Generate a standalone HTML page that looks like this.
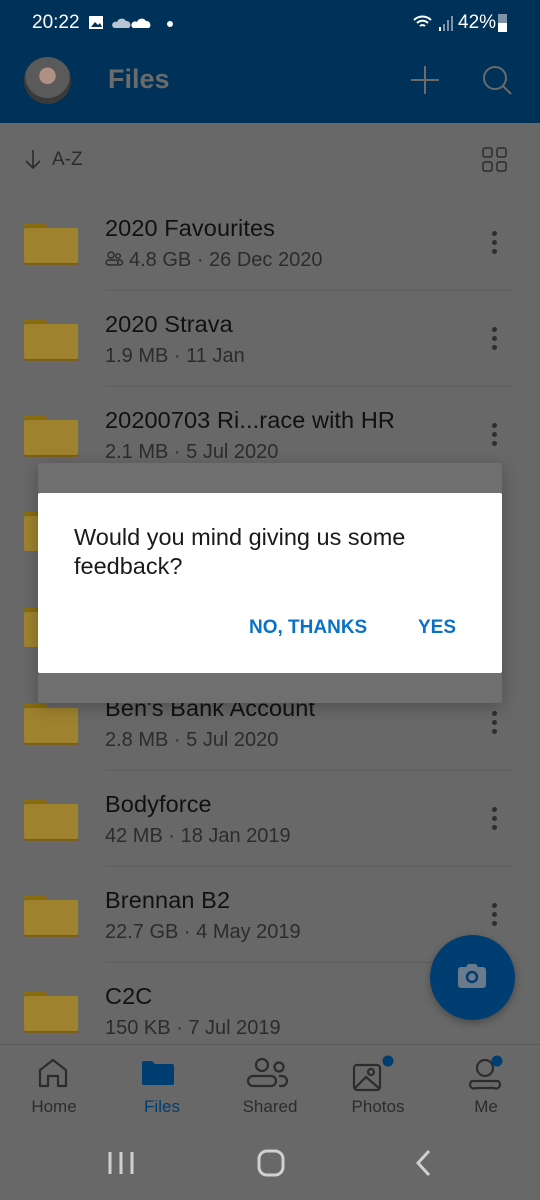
<!DOCTYPE html>
<html><head><meta charset="utf-8"><style>
*{margin:0;padding:0;box-sizing:border-box}
body{width:540px;height:1200px;overflow:hidden;background:#686868;font-family:"Liberation Sans",Roboto,sans-serif;position:relative}
.abs{position:absolute}
.hdr{left:0;top:0;width:540px;height:123px;background:#003259}
.row{position:absolute;left:0;width:540px;height:96px}
.fold{position:absolute;left:24px;top:-6px;width:54px;height:42px}
.t{position:absolute;left:105px;top:-14px;font-size:23.5px;color:#111;letter-spacing:0.1px}
.s{position:absolute;left:105px;top:20px;font-size:20px;color:#2c2c2c}
.dots{position:absolute;left:492px;top:2px;width:5px}
.dots i{display:block;width:5px;height:5px;border-radius:50%;background:#2e2e2e;margin-bottom:4px}
.sep{position:absolute;left:105px;right:25px;height:1px;background:#5e5e5e}
.nav{font-size:17px;color:#2c2c2c;text-align:center;width:100px;position:absolute;top:1097px}
</style></head><body>
<div class="abs hdr"></div>
<div class="abs" style="left:32px;top:12px;font-size:19px;color:#fff">20:22</div>
<svg class="abs" style="left:88px;top:14px" width="90" height="20">
<rect x="1" y="2" width="14" height="13" fill="#fff"/><path d="M3 13l4-5 3 3 2-2 2 4z" fill="#003259"/>
<path d="M26 14h15a4 4 0 0 0-3-7 5 5 0 0 0-9 1 3 3 0 0 0-3 6z" fill="#b8c6d4"/>
<path d="M45 14h16a4 4 0 0 0-3-7 5 5 0 0 0-9 1 3 3 0 0 0-4 6z" fill="#fff"/>
<circle cx="82" cy="10" r="3" fill="#fff"/></svg>
<svg class="abs" style="left:412px;top:13px" width="44" height="20">
<path d="M2 7a12 12 0 0 1 17 0M5 10a8 8 0 0 1 11 0M8 13a4 4 0 0 1 5 0" stroke="#fff" stroke-width="2" fill="none"/>
<rect x="27" y="14" width="2" height="4" fill="#fff"/>
<rect x="31" y="11" width="2" height="7" fill="#7f93a8"/><rect x="35" y="7" width="2" height="11" fill="#7f93a8"/><rect x="39" y="3" width="2" height="15" fill="#7f93a8"/></svg>
<div class="abs" style="left:458px;top:12px;font-size:19px;color:#fff">42%</div>
<div class="abs" style="left:498px;top:14px;width:9px;height:18px;background:#7f93a8"><div style="position:absolute;bottom:0;width:9px;height:9px;background:#fff"></div></div>
<div class="abs" style="left:24px;top:57px;width:47px;height:47px;border-radius:50%;background:radial-gradient(circle at 50% 40%,#b09080 0 22%,#5a5a5a 23% 60%,#3a3a3a 61%)"></div>
<div class="abs" style="left:108px;top:64px;font-size:27px;font-weight:bold;color:#6b6b6b">Files</div>
<svg class="abs" style="left:406px;top:62px" width="110" height="36">
<path d="M19 4v28M5 18h28" stroke="#6b6b6b" stroke-width="2"/>
<circle cx="89" cy="16" r="11" stroke="#6b6b6b" stroke-width="2" fill="none"/><path d="M97 24l8 8" stroke="#6b6b6b" stroke-width="2"/></svg>
<svg class="abs" style="left:24px;top:148px" width="20" height="24"><path d="M9 2v18M2 13l7 7 7-7" stroke="#2c2c2c" stroke-width="1.6" fill="none"/></svg>
<div class="abs" style="left:52px;top:149px;font-size:19px;color:#2c2c2c">A-Z</div>
<svg class="abs" style="left:482px;top:147px" width="26" height="26" fill="none" stroke="#2c2c2c" stroke-width="1.5"><rect x="1" y="1" width="9" height="9" rx="2"/><rect x="15" y="1" width="9" height="9" rx="2"/><rect x="1" y="15" width="9" height="9" rx="2"/><rect x="15" y="15" width="9" height="9" rx="2"/></svg>

<div class="row" style="top:229px"><svg class="fold" viewBox="0 0 54 42"><path d="M0 2a2 2 0 0 1 2-2h18l4 4H0z" fill="#8a6c10"/><rect x="0" y="5" width="54" height="37" rx="2" fill="#7a5e1e"/><rect x="0" y="5" width="54" height="35" rx="2" fill="#9e822d"/></svg><div class="t">2020 Favourites</div><div class="s"><svg width="20" height="16" style="vertical-align:-1px;margin-right:4px" fill="none" stroke="#2c2c2c" stroke-width="1.4"><circle cx="6" cy="4" r="3"/><circle cx="13" cy="5" r="2.3"/><rect x="1" y="9" width="12" height="5" rx="2.5"/><path d="M13 9h2a2.5 2.5 0 0 1 0 5h-2"/></svg>4.8 GB · 26 Dec 2020</div><div class="dots"><i></i><i></i><i></i></div><div class="sep" style="top:61px"></div></div>
<div class="row" style="top:325px"><svg class="fold" viewBox="0 0 54 42"><path d="M0 2a2 2 0 0 1 2-2h18l4 4H0z" fill="#8a6c10"/><rect x="0" y="5" width="54" height="37" rx="2" fill="#7a5e1e"/><rect x="0" y="5" width="54" height="35" rx="2" fill="#9e822d"/></svg><div class="t">2020 Strava</div><div class="s">1.9 MB · 11 Jan</div><div class="dots"><i></i><i></i><i></i></div><div class="sep" style="top:61px"></div></div>
<div class="row" style="top:421px"><svg class="fold" viewBox="0 0 54 42"><path d="M0 2a2 2 0 0 1 2-2h18l4 4H0z" fill="#8a6c10"/><rect x="0" y="5" width="54" height="37" rx="2" fill="#7a5e1e"/><rect x="0" y="5" width="54" height="35" rx="2" fill="#9e822d"/></svg><div class="t">20200703 Ri...race with HR</div><div class="s">2.1 MB · 5 Jul 2020</div><div class="dots"><i></i><i></i><i></i></div></div>
<div class="row" style="top:517px"><svg class="fold" viewBox="0 0 54 42"><path d="M0 2a2 2 0 0 1 2-2h18l4 4H0z" fill="#8a6c10"/><rect x="0" y="5" width="54" height="35" rx="2" fill="#9e822d"/></svg></div>
<div class="row" style="top:613px"><svg class="fold" viewBox="0 0 54 42"><path d="M0 2a2 2 0 0 1 2-2h18l4 4H0z" fill="#8a6c10"/><rect x="0" y="5" width="54" height="35" rx="2" fill="#9e822d"/></svg></div>
<div class="row" style="top:709px"><svg class="fold" viewBox="0 0 54 42"><path d="M0 2a2 2 0 0 1 2-2h18l4 4H0z" fill="#8a6c10"/><rect x="0" y="5" width="54" height="37" rx="2" fill="#7a5e1e"/><rect x="0" y="5" width="54" height="35" rx="2" fill="#9e822d"/></svg><div class="t">Ben's Bank Account</div><div class="s">2.8 MB · 5 Jul 2020</div><div class="dots"><i></i><i></i><i></i></div><div class="sep" style="top:61px"></div></div>
<div class="row" style="top:805px"><svg class="fold" viewBox="0 0 54 42"><path d="M0 2a2 2 0 0 1 2-2h18l4 4H0z" fill="#8a6c10"/><rect x="0" y="5" width="54" height="37" rx="2" fill="#7a5e1e"/><rect x="0" y="5" width="54" height="35" rx="2" fill="#9e822d"/></svg><div class="t">Bodyforce</div><div class="s">42 MB · 18 Jan 2019</div><div class="dots"><i></i><i></i><i></i></div><div class="sep" style="top:61px"></div></div>
<div class="row" style="top:901px"><svg class="fold" viewBox="0 0 54 42"><path d="M0 2a2 2 0 0 1 2-2h18l4 4H0z" fill="#8a6c10"/><rect x="0" y="5" width="54" height="37" rx="2" fill="#7a5e1e"/><rect x="0" y="5" width="54" height="35" rx="2" fill="#9e822d"/></svg><div class="t">Brennan B2</div><div class="s">22.7 GB · 4 May 2019</div><div class="dots"><i></i><i></i><i></i></div><div class="sep" style="top:61px"></div></div>
<div class="row" style="top:997px"><svg class="fold" viewBox="0 0 54 42"><path d="M0 2a2 2 0 0 1 2-2h18l4 4H0z" fill="#8a6c10"/><rect x="0" y="5" width="54" height="37" rx="2" fill="#7a5e1e"/><rect x="0" y="5" width="54" height="35" rx="2" fill="#9e822d"/></svg><div class="t">C2C</div><div class="s">150 KB · 7 Jul 2019</div></div>

<div class="abs" style="left:38px;top:463px;width:464px;height:240px;background:#6f6f6f;box-shadow:0 4px 16px rgba(0,0,0,.25);border-radius:2px"></div>
<div class="abs" style="left:38px;top:493px;width:464px;height:180px;background:#fff;border-radius:2px"></div>
<div class="abs" style="left:74px;top:523px;font-size:23.5px;line-height:29px;color:#1a1a1a;width:410px">Would you mind giving us some feedback?</div>
<div class="abs" style="left:249px;top:617px;font-size:19px;font-weight:bold;color:#0a72c6">NO, THANKS</div>
<div class="abs" style="left:418px;top:617px;font-size:19px;font-weight:bold;color:#0a72c6">YES</div>

<div class="abs" style="left:430px;top:935px;width:85px;height:85px;border-radius:50%;background:#003d70;box-shadow:0 3px 8px rgba(0,0,0,.3)"></div>
<svg class="abs" style="left:456px;top:962px" width="32" height="30"><path d="M2 8a3 3 0 0 1 3-3h5l2-3h8l2 3h5a3 3 0 0 1 3 3v15a3 3 0 0 1-3 3H5a3 3 0 0 1-3-3z" fill="#6b7b8b"/><circle cx="16" cy="15" r="5" fill="none" stroke="#003d70" stroke-width="2.5"/></svg>

<div class="abs" style="left:0;top:1044px;width:540px;height:1px;background:#5a5a5a"></div>
<svg class="abs" style="left:0;top:1055px" width="540" height="40" fill="none" stroke="#2c2c2c" stroke-width="2.2">
<path d="M40 31V15l13-10 13 10v16h-8v-10h-10v10z" stroke-linejoin="round"/>
<path d="M142 8a2 2 0 0 1 2-2h8l3 3h17a2 2 0 0 1 2 2v17a2 2 0 0 1-2 2h-28a2 2 0 0 1-2-2z" fill="#003d70" stroke="none"/>
<circle cx="262" cy="10" r="6"/><circle cx="279" cy="12" r="4.5"/><path d="M248 26a5 5 0 0 1 5-5h18a5 5 0 0 1 0 10h-18a5 5 0 0 1-5-5zM279 21h3a5 5 0 0 1 0 10h-3"/>
<rect x="354" y="10" width="26" height="25" rx="3"/><path d="M355 33l11-11 14 12"/><circle cx="371" cy="17" r="3"/>
<circle cx="485" cy="13" r="8"/><path d="M472 26h26a4 4 0 0 1-4 7h-18a4 4 0 0 1-4-7z"/>
<circle cx="388" cy="6" r="5.5" fill="#003d70" stroke="none"/><circle cx="497" cy="6" r="5.5" fill="#003d70" stroke="none"/>
</svg>
<div class="nav" style="left:4px">Home</div>
<div class="nav" style="left:112px;color:#003d70">Files</div>
<div class="nav" style="left:220px">Shared</div>
<div class="nav" style="left:328px">Photos</div>
<div class="nav" style="left:436px">Me</div>
<svg class="abs" style="left:0;top:1145px" width="540" height="36" fill="none" stroke="#d0d0d0" stroke-width="3">
<path d="M110 7v22M121 7v22M132 7v22"/><rect x="259" y="6" width="24" height="24" rx="8"/><path d="M429 6l-11 12 11 12"/></svg>
</body></html>
